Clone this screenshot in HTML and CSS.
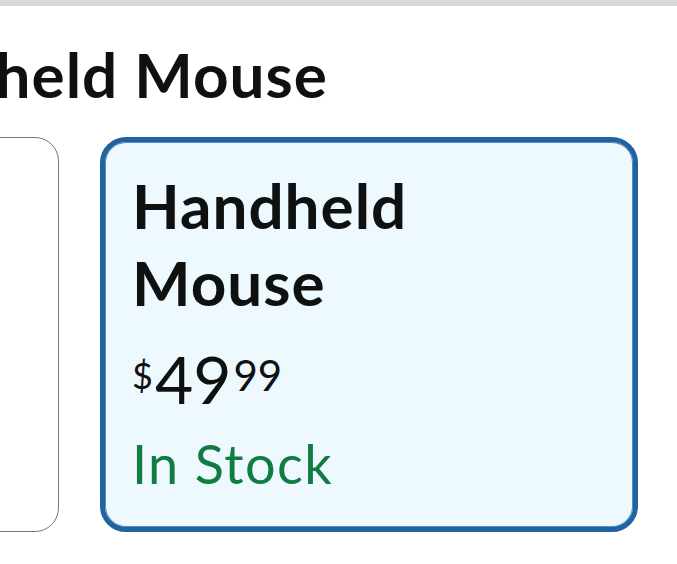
FILE: index.html
```html
<!DOCTYPE html>
<html>
<head>
  <title>Style</title>
  <meta charset="UTF-8">
  <link rel="stylesheet" href="styles.css">
</head>
<body>
  <div class="top-bar"></div>

  <h1 class="variant-title">Handheld Mouse</h1>

  <div class="swatch-row">
    <div class="swatch" aria-label="Other style"></div>
    <div class="swatch selected">
      <div class="swatch-name">Handheld Mouse</div>
      <div class="swatch-price">
        <span class="price-symbol">$</span><span class="price-whole">49</span><span class="price-fraction">99</span>
      </div>
      <div class="swatch-stock">In Stock</div>
    </div>
  </div>
</body>
</html>
```

FILE: styles.css
```css
body {
  margin: 0;
  font-family: Lato, "Noto Sans", sans-serif;
  color: #0f1111;
  background-color: #ffffff;
  overflow: hidden;
}

.top-bar {
  height: 6px;
  background-color: #d5d9d9;
}

.variant-title {
  margin: 31px 0 0 -157px;
  font-size: 62px;
  font-weight: 700;
  line-height: 74px;
  letter-spacing: 1px;
  white-space: nowrap;
}

.swatch-row {
  display: flex;
  gap: 41px;
  margin: 26px 0 0 -478px;
}

.swatch {
  flex-shrink: 0;
  width: 537px;
  height: 395px;
  box-sizing: border-box;
  border: 1px solid #767a7a;
  border-radius: 24px;
  background-color: #ffffff;
}

.swatch.selected {
  width: 538px;
  border: 5px solid #2162a1;
  border-radius: 26px;
  background-color: #edf8ff;
  box-shadow: inset 0 0 0 1px #5a8cc0;
  padding: 25px 25px 0 27px;
}

.swatch-name {
  font-size: 62px;
  font-weight: 700;
  line-height: 77px;
  letter-spacing: 1px;
  width: 320px;
}

.swatch-price {
  display: flex;
  align-items: flex-start;
  margin-top: 25px;
  line-height: 1;
}

.price-symbol {
  font-size: 36px;
  margin-top: 11px;
}
.price-whole {
  font-size: 66px;
  margin: 0 2px;
}
.price-fraction {
  font-size: 42px;
  margin-top: 8px;
}

.swatch-stock {
  margin-top: 20px;
  font-size: 54px;
  line-height: 1.2;
  letter-spacing: 1.4px;
  color: #107c41;
}
```
